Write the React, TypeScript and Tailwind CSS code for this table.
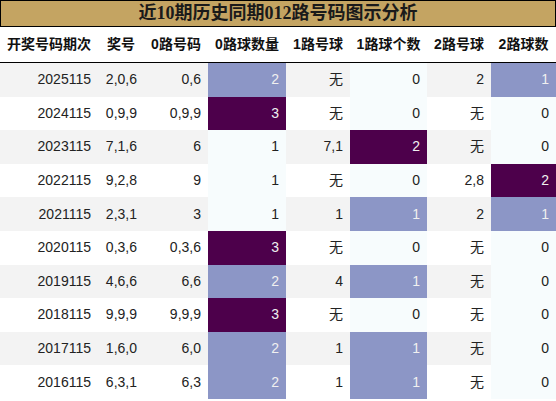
import React from "react";

// 近10期 012 路分析数据
const rows = [
  ["2025115", "2,0,6", "0,6", "2", "无", "0", "2", "1"],
  ["2024115", "0,9,9", "0,9,9", "3", "无", "0", "无", "0"],
  ["2023115", "7,1,6", "6", "1", "7,1", "2", "无", "0"],
  ["2022115", "9,2,8", "9", "1", "无", "0", "2,8", "2"],
  ["2021115", "2,3,1", "3", "1", "1", "1", "2", "1"],
  ["2020115", "0,3,6", "0,3,6", "3", "无", "0", "无", "0"],
  ["2019115", "4,6,6", "6,6", "2", "4", "1", "无", "0"],
  ["2018115", "9,9,9", "9,9,9", "3", "无", "0", "无", "0"],
  ["2017115", "1,6,0", "6,0", "2", "1", "1", "无", "0"],
  ["2016115", "6,3,1", "6,3", "2", "1", "1", "无", "0"],
];

const headers = ["开奖号码期次", "奖号", "0路号码", "0路球数量", "1路号球", "1路球个数", "2路号球", "2路球数"];

const LIGHT = "bg-[#f7fcfd] text-[#222]";
const MID = "bg-[#8c96c6] text-[#f0f0f0]";
const DARK = "bg-[#4d004b] text-[#f0f0f0]";

// per-column colour scale for the count columns
const scales: Record<number, Record<string, string>> = {
  3: { "1": LIGHT, "2": MID, "3": DARK },
  5: { "0": LIGHT, "1": MID, "2": DARK },
  7: { "0": LIGHT, "1": MID, "2": DARK },
};

const grid = "grid grid-cols-[98px_46px_64px_78px_64px_77px_64px_65px]";

export default function App() {
  return (
    <div className="w-[556px] h-[401px] bg-white overflow-hidden font-['Liberation_Sans','Noto_Sans_CJK_SC',sans-serif] text-[#222]">
      <div className="h-[27px] bg-[#c4a462] border border-black flex items-center justify-center font-['Liberation_Serif','Noto_Sans_CJK_SC',serif] font-bold text-[18px] text-[#1a1a1a]">
        近10期历史同期012路号码图示分析
      </div>
      <div className={`${grid} h-[36px] border-b border-black`}>
        {headers.map((h) => (
          <div key={h} className="flex items-center justify-center font-bold text-[14px] text-[#111]">
            {h}
          </div>
        ))}
      </div>
      {rows.map((r, i) => (
        <div key={r[0]} className={`${grid} h-[33.6px] ${i % 2 === 0 ? "bg-[#f3f3f3]" : "bg-white"}`}>
          {r.map((c, j) => (
            <div
              key={j}
              className={`flex items-center justify-end pr-[7px] text-[14px] ${scales[j] ? scales[j][c] : ""}`}
            >
              {c}
            </div>
          ))}
        </div>
      ))}
    </div>
  );
}
